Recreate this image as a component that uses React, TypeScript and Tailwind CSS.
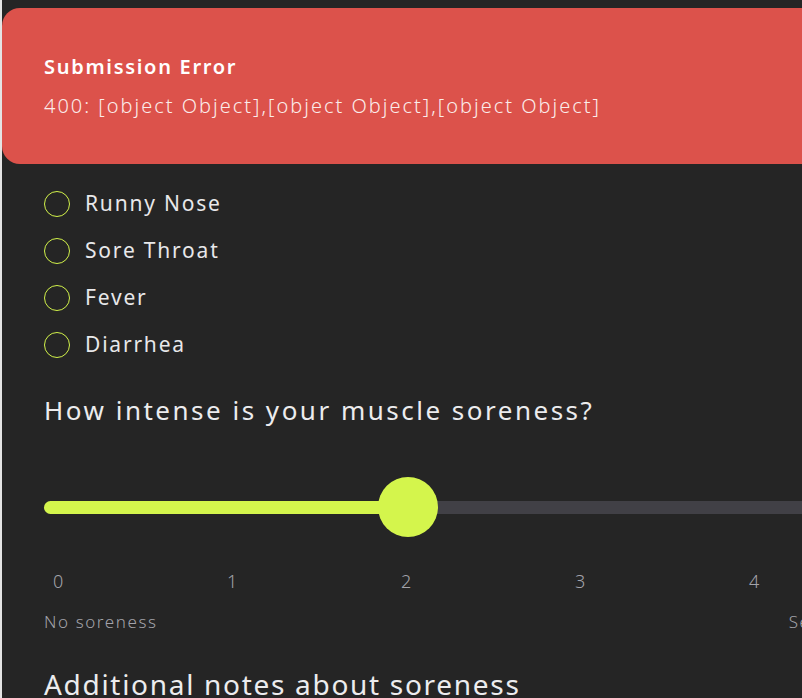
import React from "react";

const symptoms = ["Runny Nose", "Sore Throat", "Fever", "Diarrhea"];
const ticks = [0, 1, 2, 3, 4, 5];

export default function App() {
  return (
    <div
      className="w-[802px] h-[698px] overflow-hidden bg-[#252525] border-l-2 border-[#e4e4e4]"
      style={{ fontFamily: "'Noto Sans', 'Open Sans', sans-serif" }}
    >
      <div className="w-[1200px] pt-2">
        <div className="h-[156px] rounded-l-[18px] bg-[#dc524b] pl-[42px] pt-[46px] text-white">
          <div className="text-[20px] font-semibold leading-[26px] tracking-[1.7px]">Submission Error</div>
          <div className="mt-[13px] text-[20px] font-light leading-[26px] tracking-[2px] text-[#fbecea]">
            400: [object Object],[object Object],[object Object]
          </div>
        </div>

        <div className="pl-[42px] mt-[16px] flex flex-col">
          {symptoms.map((s) => (
            <div key={s} className="h-[47px] flex items-center gap-[15px]">
              <span className="w-[26px] h-[26px] rounded-full border-[1.5px] border-[#d2f24a]" />
              <span className="text-[21px] text-[#e8e8ea] leading-none tracking-[1.8px]">{s}</span>
            </div>
          ))}
        </div>

        <div className="pl-[42px] mt-[24px] text-[26px] leading-[36px] tracking-[2.5px] text-[#ececee]">
          How intense is your muscle soreness?
        </div>

        <div className="pl-[42px] mt-[49px] relative h-[60px] flex items-center">
          <div className="w-[1100px] h-[13px] rounded-full bg-[#414046] relative">
            <div className="absolute left-0 top-0 h-[13px] w-[366px] rounded-l-full bg-[#d4f54c]" />
            <div className="absolute left-[334px] top-[-24px] w-[60px] h-[60px] rounded-full bg-[#d4f54c]" />
          </div>
        </div>

        <div className="pl-[42px] mt-[32px] flex h-[24px] items-center">
          {ticks.map((t) => (
            <div key={t} className="w-[174px] shrink-0 text-[18px] font-light text-[#a3a3aa] leading-none pl-[9px]">
              {t}
            </div>
          ))}
        </div>

        <div className="pl-[42px] mt-[16px] w-[1100px] flex items-center text-[17px] font-light tracking-[1.6px] text-[#a3a3aa] leading-none h-[24px]">
          <span>No soreness</span>
          <span className="ml-[631px]">Severe soreness</span>
        </div>

        <div className="pl-[42px] mt-[33px] text-[28px] leading-[36px] tracking-[1.7px] text-[#ececee]">
          Additional notes about soreness
        </div>
      </div>
    </div>
  );
}
